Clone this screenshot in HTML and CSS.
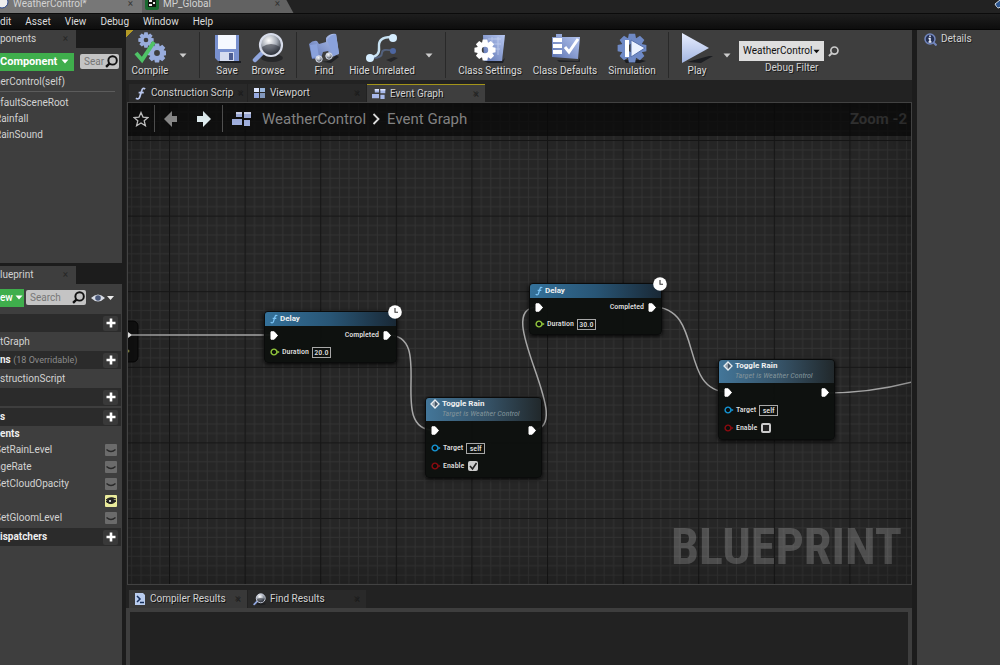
FILE: index.html
```html
<!DOCTYPE html>
<html lang="en">
<head>
<meta charset="utf-8">
<title>WeatherControl</title>
<link rel="stylesheet" href="styles.css">
</head>
<body>
<svg class="defs" width="0" height="0" aria-hidden="true">
  <defs>
    <linearGradient id="ice" x1="0" y1="0" x2="0" y2="1"><stop offset="0" stop-color="#e8eeff"/><stop offset="1" stop-color="#a3b6e2"/></linearGradient>
    <linearGradient id="blue" x1="1" y1="0" x2="0" y2="1"><stop offset="0" stop-color="#b9c9f2"/><stop offset="1" stop-color="#5b72b0"/></linearGradient>
    <radialGradient id="ball" cx=".4" cy=".3" r=".7"><stop offset="0" stop-color="#fff"/><stop offset=".5" stop-color="#a8aeb8"/><stop offset="1" stop-color="#252a33"/></radialGradient>
    <symbol id="caret" viewBox="0 0 8 5"><path d="M0.500 .5h7L4 4.500z" fill="currentColor"/></symbol>
    <symbol id="plus" viewBox="0 0 10 10"><path d="M5 .5v9M.5 5h9" stroke="#fff" stroke-width="2.600"/></symbol>
    <symbol id="search" viewBox="0 0 12 12"><circle cx="7" cy="5" r="3.900" fill="none" stroke="currentColor" stroke-width="1.800"/><path d="M4.300 7.800L1 11" stroke="currentColor" stroke-width="2.200"/></symbol>
    <symbol id="cog" viewBox="-12 -12 24 24">
      <g fill="currentColor"><g id="teeth"><path d="M-2.500-11.500h5l1 5h-7zM-2.500 11.500h5l1-5h-7z"/></g><use href="#teeth" transform="rotate(45)"/><use href="#teeth" transform="rotate(90)"/><use href="#teeth" transform="rotate(135)"/></g>
      <circle r="6" fill="none" stroke="currentColor" stroke-width="5"/>
    </symbol>
    <symbol id="graph" viewBox="0 0 20 16"><g fill="#a9b9ea"><path d="M4 1h6v5H4zM12 1h7v6h-7zM0 8h10v6H0zM12 9h6v6h-6z"/></g><path d="M4 1h6v2H4zM12 1h7v2h-7z" fill="#dfe6ff"/></symbol>
    <symbol id="lens" viewBox="0 0 32 32"><ellipse cx="20" cy="26" rx="11" ry="4" fill="#17191d" opacity=".6"/><path d="M12 19L3 28" stroke="#8fa5dd" stroke-width="4.500" stroke-linecap="round"/><circle cx="19" cy="13" r="11" fill="url(#ball)" stroke="#d7dcea" stroke-width="2.200"/><path d="M10 15q9-6 18 0-2 8-9 8t-9-8" fill="#2b3038" opacity=".55"/></symbol>
    <symbol id="fn" viewBox="0 0 12 14"><path d="M11 2.200Q8.300 0 7.300 4L5.300 10.500Q4.200 14 1 12M4 6h5.500" fill="none" stroke="currentColor" stroke-width="1.900"/></symbol>
    <symbol id="exec" viewBox="0 0 8 9"><path d="M1 .8h3.200L7.500 4.500 4.200 8.200H1z" fill="#fff" stroke="#fff" stroke-linejoin="round"/></symbol>
    <symbol id="pin" viewBox="0 0 10 8"><circle cx="4" cy="4" r="2.900" fill="#0c0f0c" stroke="currentColor" stroke-width="1.400"/><path d="M7.300 2.400L9.700 4 7.300 5.600z" fill="currentColor"/></symbol>
    <symbol id="diamond" viewBox="0 0 10 10"><path d="M5 1L9 5 5 9 1 5z" fill="#456" stroke="#e8eef2" stroke-width="1.300"/><path d="M1 5l4-4v8z" fill="#dfe8ee" opacity=".5"/></symbol>
    <symbol id="clock" viewBox="0 0 14 14"><circle cx="7" cy="7" r="6.800" fill="#fff"/><path d="M7 3v4.300h3" fill="none" stroke="#333" stroke-width="1.100"/></symbol>
    <symbol id="lid" viewBox="0 0 12 12"><path d="M1.500 5.500Q6 9.500 10.500 5.500" fill="none" stroke="#292929" stroke-width="1.400"/></symbol>
  </defs>
</svg>

<header class="tabbar">
  <div class="doc-tab active"><svg width="9" height="12" viewBox="0 0 9 12"><circle cx="2" cy="4" r="6" fill="#eee" stroke="#27458c"/></svg><span class="grow">WeatherControl*</span><span class="close">×</span></div>
  <div class="doc-tab"><svg width="14" height="14" viewBox="0 0 14 14"><rect width="14" height="13" rx="2" fill="#19692f"/><path d="M3 2h8v8H3z" fill="#10150f"/><path d="M4 3h3v2H4zM8 5h2v2H8zM4 7h3v2H4z" fill="#eee"/></svg><span class="grow">MP_Global</span><span class="close">×</span></div>
  <svg class="corner" width="8" height="14" viewBox="0 0 8 14"><path d="M8 0L3 4q3 6 5 3" fill="#2d568f" stroke="#d5dde6"/></svg>
</header>
<nav class="menu">
  <a href="#">dit</a><a href="#">Asset</a><a href="#">View</a><a href="#">Debug</a><a href="#">Window</a><a href="#">Help</a>
</nav>

<div class="workspace">
  <aside class="side">
    <section class="dock components">
      <div class="side-tab"><span class="grow">ponents</span><span class="close">×</span></div>
      <div class="dock-body">
        <div class="tools">
          <button class="add wide">Component <svg width="8" height="5"><use href="#caret"/></svg></button>
          <label class="search short"><input type="text" placeholder="Sear" aria-label="Search components"><svg width="13" height="13"><use href="#search"/></svg></label>
        </div>
        <div class="item self">herControl(self)</div>
        <div class="item">efaultSceneRoot</div>
        <div class="item">Rainfall</div>
        <div class="item">RainSound</div>
      </div>
    </section>
    <section class="dock blueprint">
      <div class="side-tab"><span class="grow">lueprint</span><span class="close">×</span></div>
      <div class="dock-body">
        <div class="tools">
          <button class="add">ew <svg width="8" height="5"><use href="#caret"/></svg></button>
          <label class="search"><input type="text" placeholder="Search" aria-label="Search blueprint"><svg width="13" height="13"><use href="#search"/></svg></label>
          <button class="view" aria-label="View options"><svg width="24" height="12" viewBox="0 0 24 12"><path d="M0 6Q7-1 14 6 7 13 0 6z" fill="#d9dde6"/><circle cx="7" cy="6" r="2.800" fill="#4a5878"/><path d="M16 4h7l-3.500 4z" fill="#eee"/></svg></button>
        </div>
        <div class="head"><span></span><button aria-label="Add graph"><svg width="10" height="10"><use href="#plus"/></svg></button></div>
        <div class="item tall">tGraph</div>
        <div class="head"><span>ns <small>(18 Overridable)</small></span><button aria-label="Add function"><svg width="10" height="10"><use href="#plus"/></svg></button></div>
        <div class="item tall">structionScript</div>
        <div class="head spaced"><span></span><button aria-label="Add macro"><svg width="10" height="10"><use href="#plus"/></svg></button></div>
        <div class="head"><span>s</span><button aria-label="Add variable"><svg width="10" height="10"><use href="#plus"/></svg></button></div>
        <div class="item strong">ents</div>
        <div class="item var"><span>SetRainLevel</span><button aria-label="Toggle visibility"><svg width="12" height="12"><use href="#lid"/></svg></button></div>
        <div class="item var"><span>ngeRate</span><button aria-label="Toggle visibility"><svg width="12" height="12"><use href="#lid"/></svg></button></div>
        <div class="item var"><span>SetCloudOpacity</span><button aria-label="Toggle visibility"><svg width="12" height="12"><use href="#lid"/></svg></button></div>
        <div class="item var"><span></span><button class="on" aria-label="Toggle visibility"><svg width="12" height="12" viewBox="0 0 12 12"><path d="M1 5Q5 1 11 4M1 6.500Q6 2.500 11 6 6 11 1 6.500z" fill="#222" stroke="#222"/><circle cx="5" cy="6" r="1" fill="#fff"/></svg></button></div>
        <div class="item var"><span>SetGloomLevel</span><button aria-label="Toggle visibility"><svg width="12" height="12"><use href="#lid"/></svg></button></div>
        <div class="head last"><span>ispatchers</span><button aria-label="Add dispatcher"><svg width="10" height="10"><use href="#plus"/></svg></button></div>
      </div>
    </section>
  </aside>

  <main class="center">
    <div class="toolbar">
      <button class="tool w48"><svg width="32" height="32" viewBox="0 0 32 32"><g color="#98acdc"><use href="#cog" x="4" y="0" width="16" height="16"/><use href="#cog" x="13" y="11" width="20" height="20"/></g><path d="M2 21l6 7L20 10" fill="none" stroke="#4fc266" stroke-width="4"/></svg>Compile</button>
      <button class="drop" aria-label="Compile options"><svg width="8" height="5"><use href="#caret"/></svg></button>
      <span class="sep"></span>
      <button class="tool w40"><svg width="32" height="32" viewBox="0 0 32 32"><path d="M8 29h22v2H8z" fill="#1b1d22"/><path d="M4 3h24v26H7l-3-3z" fill="#7890cf"/><path d="M7 3h18v14H7z" fill="#f5f8ff"/><path d="M9 20h14v9H9z" fill="#d5dcef"/><path d="M18 21h4v7h-4z" fill="#4c5d91"/></svg>Save</button>
      <button class="tool w42"><svg width="32" height="32"><use href="#lens"/></svg>Browse</button>
      <span class="sep"></span>
      <button class="tool w40"><svg width="32" height="32" viewBox="0 0 32 32"><path d="M8 29q14 3 20-6l3 2-8 6z" fill="#202226"/><path d="M1 12q4-4 8-3l2 3 7-2V6q4-5 10-4l3 20-7 3-4-6-5 1-2 6-9 1z" fill="url(#blue)"/><path d="M19 8q4-6 9-6l3 19-6 3z" fill="#8aa2dc"/><path d="M2 13l7-1 2 13-7 1z" fill="#8aa2dc"/><circle cx="11" cy="27" r="3.200" fill="url(#ball)" stroke="#dfe5f3"/><circle cx="21" cy="24" r="3.200" fill="url(#ball)" stroke="#dfe5f3"/></svg>Find</button>
      <button class="tool w76"><svg width="32" height="32" viewBox="0 0 32 32"><path d="M6 26q10 0 10-5t11-2" fill="none" stroke="#53617c" stroke-width="2"/><circle cx="27" cy="19" r="3" fill="#4d66a0"/><path d="M4 25q10 0 9-10T25 5" fill="none" stroke="#c7e1f2" stroke-width="2.400"/><circle cx="27" cy="6" r="4" fill="#d5edff"/><circle cx="4" cy="26" r="4" fill="#d5edff"/><path d="M20 28l8-3 4 1-7 4z" fill="#252629"/></svg>Hide Unrelated</button>
      <button class="drop" aria-label="Hide unrelated options"><svg width="8" height="5"><use href="#caret"/></svg></button>
      <span class="sep"></span>
      <button class="tool w74"><svg width="32" height="32" viewBox="0 0 32 32"><path d="M10 29h18l3-3-2 5H14z" fill="#1d2026"/><path d="M9 3h22l-3 26H10z" fill="url(#blue)"/><path d="M14 7h13M14 12h13M14 17h12M18 5v18M24 5v18" stroke="#dbe4fb" opacity=".5"/><use href="#cog" x="0" y="7" width="22" height="22" color="#fff"/></svg>Class Settings</button>
      <button class="tool w76"><svg width="32" height="32" viewBox="0 0 32 32"><path d="M3 5h4V2h6v3h18l-2 22-26-2z" fill="url(#blue)"/><path d="M4 8h9M4 14h9M4 20h9" stroke="#fff" stroke-width="4"/><path d="M16 15l4 5L29 7" fill="none" stroke="#fff" stroke-width="3"/><path d="M8 28l21 1 2-3v4H10z" fill="#222428"/></svg>Class Defaults</button>
      <button class="tool w58"><svg width="32" height="32" viewBox="0 0 32 32"><path d="M8 28h18l4 1-6 2H10z" fill="#1c1e22"/><use href="#cog" x="1" y="1" width="30" height="30" color="#6f8ac6"/><path d="M9 8h4v17H9z" fill="#fff"/><path d="M15 8l14 8-14 9z" fill="#eaf1ff" stroke="#5670aa"/></svg>Simulation</button>
      <span class="sep"></span>
      <button class="tool w42"><svg width="32" height="32" viewBox="0 0 32 32"><path d="M6 30l22-6h4l-12 7z" fill="#1c1e22"/><path d="M1 1l27 15L1 31z" fill="url(#ice)"/></svg>Play</button>
      <button class="drop" aria-label="Play options"><svg width="8" height="5"><use href="#caret"/></svg></button>
      <div class="debug">
        <div class="debug-row">
          <span class="select"><select id="debug-filter"><option>WeatherControl</option></select><svg width="7" height="5"><use href="#caret"/></svg></span>
          <svg class="find" width="11" height="11"><use href="#search"/></svg>
        </div>
        <label for="debug-filter">Debug Filter</label>
      </div>
    </div>

    <div class="tabs">
      <button class="tab"><svg width="13" height="13" color="#b9c7ee"><use href="#fn"/></svg><span class="grow">Construction Scrip</span><span class="close">×</span></button>
      <button class="tab"><svg width="13" height="12" viewBox="0 0 13 12"><path d="M1 1h5v4H1z" fill="#dfe8ff"/><path d="M7 1h5v4H7z" fill="#9bb8df"/><path d="M1 6h5v5H1z" fill="#96a9e0"/><path d="M7 6h5v5H7z" fill="#8298bd"/></svg><span class="grow">Viewport</span><span class="close">×</span></button>
      <button class="tab current"><svg width="14" height="12"><use href="#graph"/></svg><span class="grow">Event Graph</span><span class="close">×</span></button>
    </div>

    <section class="graph">
      <svg class="canvas" aria-hidden="true">
        <defs>
          <pattern id="grid" width="80" height="80" patternUnits="userSpaceOnUse" patternTransform="translate(41 37) scale(.945)">
            <path d="M10.500 0v80M20.500 0v80M30.500 0v80M40.500 0v80M50.500 0v80M60.500 0v80M70.500 0v80M0 10.500h80M0 20.500h80M0 30.500h80M0 40.500h80M0 50.500h80M0 60.500h80M0 70.500h80" stroke="#333"/>
            <path d="M.5 0v80M0 .5h80" stroke="#161616" stroke-width="1.300"/>
          </pattern>
        </defs>
        <rect width="100%" height="100%" fill="url(#grid)"/>
        <g transform="translate(-128 -103)">
          <rect x="118" y="321" width="20" height="41" rx="5" fill="#111" stroke="#060606"/>
          <path d="M128 332l4 3-4 3z" fill="#fff"/><circle cx="128" cy="351" r="1.500" fill="#8a8b45"/>
          <g fill="none" stroke="#a6a6a6" stroke-width="1.500">
            <path d="M131 335H272"/>
            <path d="M388 335C436 335 386 430 434 430"/>
            <path d="M531 430C581 430 488 307 538 307"/>
            <path d="M653 307C705 307 678 392 728 392"/>
            <path d="M826 393Q870 393 912 382"/>
          </g>
        </g>
      </svg>
      <div class="crumbs">
        <button aria-label="Favourite"><svg width="16" height="16" viewBox="0 0 16 16"><path d="M8 1.500l2 4.600 5 .4-3.800 3.300 1.200 4.900L8 12l-4.400 2.700 1.200-4.900L1 6.500l5-.4z" fill="none" stroke="#ddd" stroke-width="1.300"/></svg></button>
        <span class="bar"></span>
        <button aria-label="Back"><svg width="14" height="16" viewBox="0 0 14 16"><path d="M0 8l8-8v5h5v6H8v5z" fill="#929292"/></svg></button>
        <button aria-label="Forward"><svg width="14" height="16" viewBox="0 0 14 16"><path d="M14 8L6 0v5H0v6h6v5z" fill="#eefcff"/></svg></button>
        <span class="bar"></span>
        <svg class="crumb-icon" width="20" height="16"><use href="#graph"/></svg>
        <a href="#">WeatherControl</a>
        <svg width="8" height="12" viewBox="0 0 8 12"><path d="M1.500 1l5 5-5 5" fill="none" stroke="#eee" stroke-width="1.800"/></svg>
        <a href="#" class="grow">Event Graph</a>
        <span class="zoom">Zoom -2</span>
      </div>

      <article class="node delay n1">
        <header><svg width="8" height="10" color="#7cc4f5"><use href="#fn"/></svg><b>Delay</b></header>
        <svg class="clock" width="14" height="14"><use href="#clock"/></svg>
        <div class="pins"><svg width="8" height="9"><use href="#exec"/></svg><span class="out">Completed</span><svg width="8" height="9"><use href="#exec"/></svg></div>
        <div class="pins"><svg width="10" height="8" color="#93c83d"><use href="#pin"/></svg><label for="d1">Duration</label><input id="d1" class="num" type="text" value="20.0"></div>
      </article>
      <article class="node toggle n2">
        <header><svg width="10" height="10"><use href="#diamond"/></svg><div><b>Toggle Rain</b><i>Target is Weather Control</i></div></header>
        <div class="pins"><svg width="8" height="9"><use href="#exec"/></svg><span class="out"></span><svg width="8" height="9"><use href="#exec"/></svg></div>
        <div class="pins"><svg width="10" height="8" color="#1696d6"><use href="#pin"/></svg><label for="t1">Target</label><input id="t1" class="num" type="text" value="self"></div>
        <div class="pins"><svg width="10" height="8" color="#8d0b10"><use href="#pin"/></svg><label for="e1">Enable</label><input id="e1" type="checkbox" checked></div>
      </article>
      <article class="node delay n3">
        <header><svg width="8" height="10" color="#7cc4f5"><use href="#fn"/></svg><b>Delay</b></header>
        <svg class="clock" width="14" height="14"><use href="#clock"/></svg>
        <div class="pins"><svg width="8" height="9"><use href="#exec"/></svg><span class="out">Completed</span><svg width="8" height="9"><use href="#exec"/></svg></div>
        <div class="pins"><svg width="10" height="8" color="#93c83d"><use href="#pin"/></svg><label for="d2">Duration</label><input id="d2" class="num" type="text" value="30.0"></div>
      </article>
      <article class="node toggle n4">
        <header><svg width="10" height="10"><use href="#diamond"/></svg><div><b>Toggle Rain</b><i>Target is Weather Control</i></div></header>
        <div class="pins"><svg width="8" height="9"><use href="#exec"/></svg><span class="out"></span><svg width="8" height="9"><use href="#exec"/></svg></div>
        <div class="pins"><svg width="10" height="8" color="#1696d6"><use href="#pin"/></svg><label for="t2">Target</label><input id="t2" class="num" type="text" value="self"></div>
        <div class="pins"><svg width="10" height="8" color="#8d0b10"><use href="#pin"/></svg><label for="e2">Enable</label><input id="e2" type="checkbox"></div>
      </article>
      <div class="watermark">BLUEPRINT</div>
    </section>

    <div class="tabs bottom">
      <button class="tab lit"><svg width="12" height="12" viewBox="0 0 12 12"><path d="M1 0h8l2 2v10H1z" fill="#b9ccee"/><path d="M3 3l3 3-3 3M6 9.500h4" fill="none" stroke="#17305c" stroke-width="1.500"/></svg><span class="grow">Compiler Results</span><span class="close">×</span></button>
      <button class="tab"><svg width="13" height="13"><use href="#lens"/></svg><span class="grow">Find Results</span><span class="close">×</span></button>
    </div>
    <section class="results"></section>
  </main>

  <aside class="details">
    <h2><svg width="13" height="13" viewBox="0 0 13 13"><circle cx="6" cy="6" r="5" fill="#253052" stroke="#7286bd" stroke-width="1.500"/><path d="M9.500 9.500l3 3" stroke="#7286bd" stroke-width="2"/><path d="M6 2.500v1.500M4.500 5.500H6v3.500M4.500 9h3" stroke="#e9eefb" stroke-width="1.500" fill="none"/></svg>Details</h2>
  </aside>
</div>
</body>
</html>
```
FILE: styles.css
```css
* { box-sizing: border-box; }
html, body { height: 100%; }
body {
  margin: 0;
  display: flex;
  flex-direction: column;
  overflow: hidden;
  background: #1c1c1c;
  color: #d2d2d2;
  font: 10px/14px Roboto, "Noto Sans", sans-serif;
}
button, input, select { font: inherit; color: inherit; margin: 0; padding: 0; border: 0; background: none; }
a { color: inherit; text-decoration: none; }
svg { flex: none; display: block; }
.defs { position: absolute; }
.grow { flex: 1; text-align: left; }
.close { color: #1c1c1c; opacity: .7; }

.tabbar { display: flex; height: 14px; background: #222; overflow: hidden; border-bottom: 1px solid #0b0b0b; }
.doc-tab {
  display: flex; align-items: center; gap: 4px; width: 152px; height: 14px;
  padding: 0 14px 7px 3px; background: #626262;
  clip-path: polygon(0 0, 95% 0, 100% 100%, 0 100%);
}
.doc-tab.active { width: 142px; padding: 0 9px 7px 0; background: #777; clip-path: none; }
.corner { margin-left: auto; }

.menu { display: flex; gap: 14px; height: 16px; padding-top: 1px; background: linear-gradient(#1e1e1e, #0d0d0d); border-bottom: 1px solid #050505; }
.menu a { color: #dcdcdc; }

.workspace { flex: 1; min-height: 0; display: grid; grid-template-columns: 122px minmax(0, 1fr) 84px; gap: 4px; }

.side { display: flex; flex-direction: column; gap: 3px; min-height: 0; overflow: hidden; }
.dock { display: flex; flex-direction: column; }
.components { height: 233px; }
.blueprint { flex: 1; }
.side-tab { display: flex; width: 76px; height: 18px; padding: 2px 8px 0 0; background: #3e3e3e; }
.dock-body { flex: 1; padding-right: 1px; background: #3e3e3e; }
.tools { display: flex; align-items: center; height: 27px; gap: 2px; }
.add { display: flex; align-items: center; gap: 2px; height: 18px; width: 24px; background: #3fae4c; color: #fff; font-weight: 500; }
.add.wide { width: 74px; gap: 4px; font-size: 11px; font-weight: 700; }
.add.wide + .search { margin-left: 4px; }
.search { display: flex; align-items: center; width: 60px; height: 15px; padding: 0 1px 0 4px; border-radius: 2px; background: #c4c4c4; color: #111; }
.search.short { width: 39px; }
.search input { flex: 1; min-width: 0; }
.search input::placeholder { color: #777; opacity: 1; }
.view { margin-left: 3px; }
.item { display: flex; align-items: center; height: 16px; margin-left: -5px; white-space: nowrap; }
.item.self { height: 20px; margin: -3px 6px 3px -5px; border-bottom: 1px solid #5c5c5c; }
.item.tall { height: 19px; margin-left: 0; }
.item.strong { height: 15px; font-weight: 700; margin-left: 0; color: #eee; }
.item.var { height: 17px; justify-content: space-between; padding-right: 4px; }
.item.var button { width: 12px; height: 12px; background: #6b6b6b; border-radius: 1px; }
.item.var .on { background: #eaeb9b; }
.head { display: flex; align-items: center; justify-content: space-between; height: 18px; background: #2b2b2b; color: #eee; font-weight: 700; padding-right: 3px; white-space: nowrap; }
.tools + .head { margin-top: 3px; }
.head.spaced { margin-bottom: 2px; }
.head.last { margin-top: 2px; }
.head small { font-size: 9px; font-weight: 400; color: #8c8c8c; }
.head button { display: grid; place-items: center; width: 15px; height: 15px; background: #393939; border-radius: 2px; }

.center { display: flex; flex-direction: column; min-width: 0; background: #222; }
.toolbar { display: flex; height: 50px; background: linear-gradient(135deg, #b49a26 5px, #3e3e3e 5px); }
.tool { display: flex; flex-direction: column; align-items: center; padding-top: 2px; line-height: 14px; color: #dadada; white-space: nowrap; text-shadow: 1px 1px #1b1b1b; }
.w40 { width: 40px; } .w42 { width: 42px; } .w48 { width: 48px; } .w58 { width: 58px; }
.w74 { width: 74px; } .w76 { width: 76px; }
.drop { display: grid; place-items: center; width: 18px; color: #ccc; }
.sep { width: 1px; margin: 2px 7px; background: #292929; }
.debug { display: flex; flex-direction: column; margin-left: 3px; padding-top: 11px; }
.debug-row { display: flex; align-items: center; gap: 4px; }
.select { position: relative; display: flex; color: #111; }
.select select { width: 85px; height: 20px; padding-left: 4px; appearance: none; background: #dedede; }
.select svg { position: absolute; right: 4px; top: 8px; pointer-events: none; }
.debug label { padding-left: 26px; text-shadow: 1px 1px #1b1b1b; }
.find { color: #ccc; }

.tabs { display: flex; gap: 1px; height: 22px; padding: 4px 0 0 3px; }
.tab { display: flex; align-items: center; gap: 4px; width: 118px; height: 18px; padding: 0 7px 0 5px; background: #292929; white-space: nowrap; text-shadow: 1px 1px #111; }
.tab.current { background: #3e3e3e; border-top: 1px solid #a39419; }
.tab.lit { background: #383838; }
.tabs.bottom { height: 23px; padding-top: 5px; }

.graph {
  position: relative; flex: 1; min-height: 0; margin-left: 1px; overflow: hidden;
  border: 1px solid #424242; background: #262626;
}
.graph::after { content: ""; position: absolute; inset: 0; box-shadow: inset 0 0 50px rgba(0, 0, 0, .3); pointer-events: none; }
.canvas { position: absolute; width: 100%; height: 100%; }
.crumbs { position: relative; display: flex; align-items: center; height: 33px; padding: 0 4px 2px 5px; background: rgba(10, 10, 10, .75); color: #8c8c8c; font-size: 15px; line-height: 18px; }
.crumbs .bar { width: 1px; height: 27px; margin: 0 9px 0 5px; background: #555; }
.crumbs button + button { margin-left: 19px; }
.crumbs button + .bar:not(:nth-child(2)) { margin-left: 11px; }
.crumb-icon { margin-right: 10px; }
.crumbs a + svg { margin: 0 7px 0 6px; }
.zoom { color: #333; font-weight: 700; }

.node { position: absolute; border: 1px solid #0a0b0b; border-radius: 4px; background: rgba(13, 16, 14, .95); color: #dedede; font: 500 8px/10px "Roboto Condensed", Roboto, sans-serif; box-shadow: 0 1px 4px #000; }
.node header { display: flex; gap: 2px; padding: 1px 5px; border-radius: 3px 3px 0 0; background: linear-gradient(90deg, #34719a, #285575 50%, #192835); color: #f1f1f1; }
.node b { display: block; font-family: Roboto, sans-serif; }
.node i { display: block; color: #81939a; font-weight: 400; white-space: nowrap; }
.delay { width: 133px; height: 52px; }
.delay header { height: 14px; padding-top: 2px; padding-left: 5px; }
.toggle { width: 117px; height: 81px; }
.toggle header { height: 23px; padding-left: 4px; background: linear-gradient(90deg, #437699, #355165 55%, #21282b); }
.n1 { left: 136px; top: 208px; }
.n2 { left: 297px; top: 294px; }
.n3 { left: 401px; top: 180px; }
.n4 { left: 590px; top: 256px; }
.clock { position: absolute; right: -6px; top: -7px; }
.pins { display: flex; align-items: center; gap: 2px; height: 18px; padding: 0 5px 0 5px; }
.pins .out { flex: 1; text-align: right; padding-right: 2px; }
.delay .pins:nth-of-type(2) { height: 16px; }
.pins .num { width: 19px; height: 11px; margin-left: 1px; border: 1px solid #a8a8a8; text-align: center; }
.pins input[type="checkbox"] { appearance: none; width: 10px; height: 10px; margin-left: 2px; border: 2px solid #ccc; border-radius: 2px; background: #222; }
.pins input[type="checkbox"]:checked {
  border-width: 0;
  background: #ccc url("data:image/svg+xml,%3Csvg xmlns='http://www.w3.org/2000/svg' viewBox='0 0 10 10'%3E%3Cpath d='M2 5l2.500 3L8.500 2' fill='none' stroke='%23222' stroke-width='1.600'/%3E%3C/svg%3E");
}
.watermark { position: absolute; right: 9px; bottom: 9px; color: rgba(255, 255, 255, .2); font: 700 50px/56px "Roboto Condensed", Roboto, sans-serif; }

.results { height: 57px; border: 4px solid #3e3e3e; border-bottom: 0; background: #222; }
.details { background: #3e3e3e; margin-left: 1px; }
.details h2 { display: flex; align-items: center; gap: 4px; margin: 0; padding: 2px 0 0 7px; font: inherit; text-shadow: 1px 1px #222; }
```
